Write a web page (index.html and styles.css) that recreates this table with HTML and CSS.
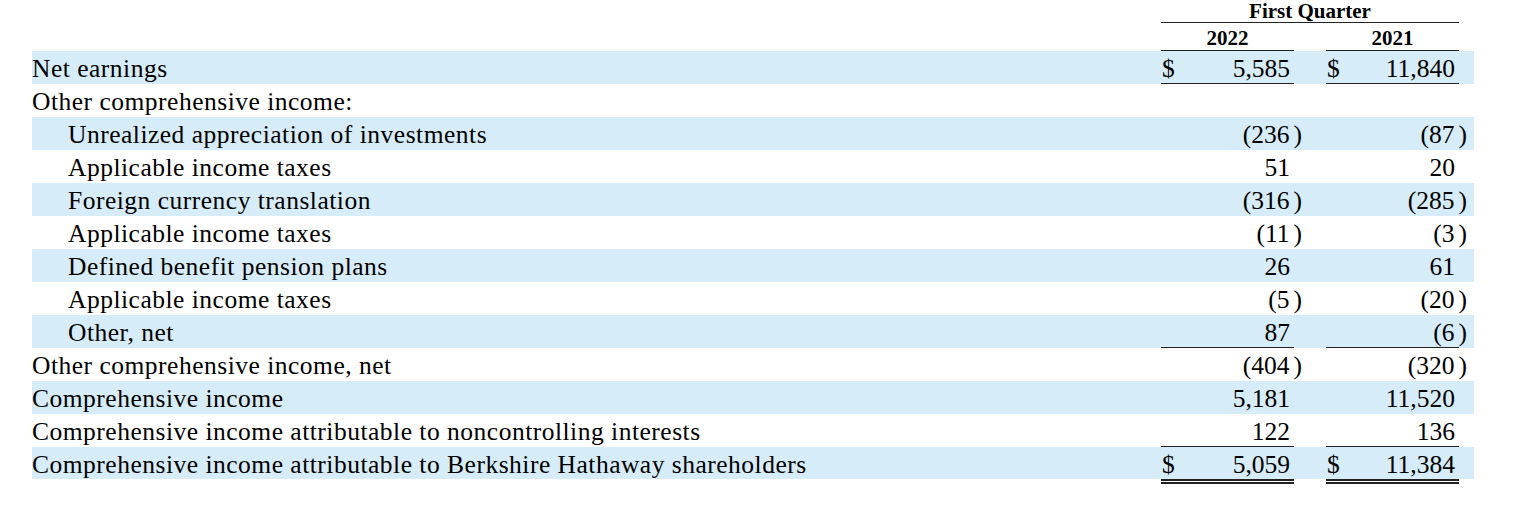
FILE: index.html
```html
<!DOCTYPE html>
<html lang="en">

<head>
  <meta charset="UTF-8">
  <meta name="viewport" content="width=device-width, initial-scale=1.0">
  <title>Comprehensive Income</title>
  <link rel="stylesheet" href="styles.css">
</head>

<body>
  <main class="statement">
    <table class="income">
      <colgroup>
        <col class="c-label">
        <col class="c-amt">
        <col class="c-gap">
        <col class="c-amt">
        <col class="c-pad">
      </colgroup>
      <thead>
        <tr class="period">
          <th></th>
          <th colspan="3" class="rule">First Quarter</th>
          <th></th>
        </tr>
        <tr class="years">
          <th></th>
          <th class="rule">2022</th>
          <th></th>
          <th class="rule">2021</th>
          <th></th>
        </tr>
      </thead>
      <tbody>
        <tr class="shade">
          <td class="label">Net earnings</td>
          <td class="amt rule"><span class="cur">$</span>5,585</td>
          <td></td>
          <td class="amt rule"><span class="cur">$</span>11,840</td>
          <td></td>
        </tr>
        <tr>
          <td class="label">Other comprehensive income:</td>
          <td class="amt"></td>
          <td></td>
          <td class="amt"></td>
          <td></td>
        </tr>
        <tr class="shade">
          <td class="label sub">Unrealized appreciation of investments</td>
          <td class="amt">(236<span class="cl">)</span></td>
          <td></td>
          <td class="amt">(87<span class="cl">)</span></td>
          <td></td>
        </tr>
        <tr>
          <td class="label sub">Applicable income taxes</td>
          <td class="amt">51</td>
          <td></td>
          <td class="amt">20</td>
          <td></td>
        </tr>
        <tr class="shade">
          <td class="label sub">Foreign currency translation</td>
          <td class="amt">(316<span class="cl">)</span></td>
          <td></td>
          <td class="amt">(285<span class="cl">)</span></td>
          <td></td>
        </tr>
        <tr>
          <td class="label sub">Applicable income taxes</td>
          <td class="amt">(11<span class="cl">)</span></td>
          <td></td>
          <td class="amt">(3<span class="cl">)</span></td>
          <td></td>
        </tr>
        <tr class="shade">
          <td class="label sub">Defined benefit pension plans</td>
          <td class="amt">26</td>
          <td></td>
          <td class="amt">61</td>
          <td></td>
        </tr>
        <tr>
          <td class="label sub">Applicable income taxes</td>
          <td class="amt">(5<span class="cl">)</span></td>
          <td></td>
          <td class="amt">(20<span class="cl">)</span></td>
          <td></td>
        </tr>
        <tr class="shade">
          <td class="label sub">Other, net</td>
          <td class="amt rule">87</td>
          <td></td>
          <td class="amt rule">(6<span class="cl">)</span></td>
          <td></td>
        </tr>
        <tr>
          <td class="label">Other comprehensive income, net</td>
          <td class="amt">(404<span class="cl">)</span></td>
          <td></td>
          <td class="amt">(320<span class="cl">)</span></td>
          <td></td>
        </tr>
        <tr class="shade">
          <td class="label">Comprehensive income</td>
          <td class="amt">5,181</td>
          <td></td>
          <td class="amt">11,520</td>
          <td></td>
        </tr>
        <tr>
          <td class="label">Comprehensive income attributable to noncontrolling interests</td>
          <td class="amt rule">122</td>
          <td></td>
          <td class="amt rule">136</td>
          <td></td>
        </tr>
        <tr class="shade total-row">
          <td class="label">Comprehensive income attributable to Berkshire Hathaway shareholders</td>
          <td class="amt total"><span class="cur">$</span>5,059</td>
          <td></td>
          <td class="amt total"><span class="cur">$</span>11,384</td>
          <td></td>
        </tr>
      </tbody>
    </table>
  </main>
</body>

</html>
```

FILE: styles.css
```css
body {
  margin: 0;
  background: #fff;
  color: #000;
  font-family: "Liberation Serif", "Times New Roman", serif;
}

.statement {
  padding-left: 32px;
}

.income {
  border-collapse: separate;
  border-spacing: 0;
  width: 1442px;
  table-layout: fixed;
}

.c-amt {
  width: 133px;
}

.c-gap {
  width: 32px;
}

.c-pad {
  width: 15px;
}

/* header */
.income th {
  font-size: 21px;
  font-weight: bold;
  text-align: center;
  padding: 0;
  line-height: 22px;
}

.period th {
  height: 22px;
}

.years th {
  height: 26px;
  vertical-align: bottom;
  padding-bottom: 1px;
}

/* body rows */
.income td {
  font-size: 25.5px;
  padding: 3px 0 1px 0;
  line-height: 29px;
  white-space: nowrap;
  background-clip: padding-box;
}

.label {
  letter-spacing: 0.5px;
}

.income .rule {
  border-bottom: 1px solid #222;
}

.income td.rule {
  padding-bottom: 0;
}

.total-row td {
  padding-bottom: 0;
  border-bottom: 5px solid transparent;
}

.total-row td.total {
  border-bottom: 5px double #222;
}

.shade td {
  background-color: #d6ecf8;
}

.income td.sub {
  padding-left: 36px;
}

.income td.amt {
  text-align: right;
  padding-right: 4px;
}

.cur {
  float: left;
  padding-left: 1px;
}

.cl {
  padding-left: 4px;
  margin-right: -12px;
}
```
